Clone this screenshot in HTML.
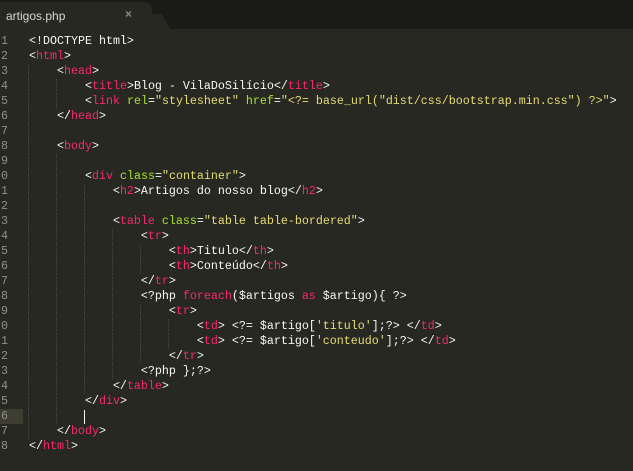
<!DOCTYPE html>
<html><head><meta charset="utf-8"><style>
html,body{margin:0;padding:0;width:633px;height:471px;overflow:hidden;background:#272822}
.top{position:absolute;left:0;top:0;width:633px;height:29px;background:#1a1a16}
.tab{position:absolute;left:0;top:2px;width:152px;height:27px;background:#272822;border-radius:0 8px 0 0;}
.tab:after{content:"";position:absolute;right:-14px;top:12px;width:20px;height:15px;background:#272822;transform:skewX(30deg);}
.tabt{position:absolute;left:6px;top:9px;color:#d8d8d0;font:12px "Liberation Sans",sans-serif;z-index:2}
.x{position:absolute;left:125px;top:7px;color:#8a8a85;font:bold 12px "Liberation Sans",sans-serif;z-index:2}
.code{position:absolute;left:0;top:34px;width:633px;font:11.67px/15px "Liberation Mono",monospace;color:#f8f8f2}
.l{height:15px;position:relative}
.n{position:absolute;left:1px;color:#8f908a}
.hl{background:#3e3d32;position:absolute;left:0;top:0;width:23px;height:15px}
.t{position:absolute;left:29px;white-space:pre}
.g{position:absolute;top:0;height:15px;border-left:1px dotted #464741}
.k{color:#f92672}.a{color:#a6e22e}.s{color:#e6db74}
.cur{position:absolute;left:84px;top:1px;width:1px;height:14px;background:#f8f8f0}
</style></head><body>
<div class="top"><div class="tab"></div><span class="tabt">artigos.php</span><span class="x">×</span></div>
<div class="code">
<div class="l"><span class="n">1</span><span class="t">&lt;!DOCTYPE html&gt;</span></div>
<div class="l"><span class="n">2</span><span class="t">&lt;<span class="k">html</span>&gt;</span></div>
<div class="l"><span class="n">3</span><i class="g" style="left:28px"></i><span class="t">    &lt;<span class="k">head</span>&gt;</span></div>
<div class="l"><span class="n">4</span><i class="g" style="left:28px"></i><i class="g" style="left:56px"></i><span class="t">        &lt;<span class="k">title</span>&gt;Blog - VilaDoSilício&lt;/<span class="k">title</span>&gt;</span></div>
<div class="l"><span class="n">5</span><i class="g" style="left:28px"></i><i class="g" style="left:56px"></i><span class="t">        &lt;<span class="k">link</span> <span class="a">rel</span>=<span class="s">"stylesheet"</span> <span class="a">href</span>=<span class="s">"&lt;?= base_url("dist/css/bootstrap.min.css") ?&gt;"</span>&gt;</span></div>
<div class="l"><span class="n">6</span><i class="g" style="left:28px"></i><span class="t">    &lt;/<span class="k">head</span>&gt;</span></div>
<div class="l"><span class="n">7</span><i class="g" style="left:28px"></i></div>
<div class="l"><span class="n">8</span><i class="g" style="left:28px"></i><span class="t">    &lt;<span class="k">body</span>&gt;</span></div>
<div class="l"><span class="n">9</span><i class="g" style="left:28px"></i><i class="g" style="left:56px"></i></div>
<div class="l"><span class="n">0</span><i class="g" style="left:28px"></i><i class="g" style="left:56px"></i><span class="t">        &lt;<span class="k">div</span> <span class="a">class</span>=<span class="s">"container"</span>&gt;</span></div>
<div class="l"><span class="n">1</span><i class="g" style="left:28px"></i><i class="g" style="left:56px"></i><i class="g" style="left:84px"></i><span class="t">            &lt;<span class="k">h2</span>&gt;Artigos do nosso blog&lt;/<span class="k">h2</span>&gt;</span></div>
<div class="l"><span class="n">2</span><i class="g" style="left:28px"></i><i class="g" style="left:56px"></i><i class="g" style="left:84px"></i></div>
<div class="l"><span class="n">3</span><i class="g" style="left:28px"></i><i class="g" style="left:56px"></i><i class="g" style="left:84px"></i><span class="t">            &lt;<span class="k">table</span> <span class="a">class</span>=<span class="s">"table table-bordered"</span>&gt;</span></div>
<div class="l"><span class="n">4</span><i class="g" style="left:28px"></i><i class="g" style="left:56px"></i><i class="g" style="left:84px"></i><i class="g" style="left:112px"></i><span class="t">                &lt;<span class="k">tr</span>&gt;</span></div>
<div class="l"><span class="n">5</span><i class="g" style="left:28px"></i><i class="g" style="left:56px"></i><i class="g" style="left:84px"></i><i class="g" style="left:112px"></i><i class="g" style="left:140px"></i><span class="t">                    &lt;<span class="k">th</span>&gt;Titulo&lt;/<span class="k">th</span>&gt;</span></div>
<div class="l"><span class="n">6</span><i class="g" style="left:28px"></i><i class="g" style="left:56px"></i><i class="g" style="left:84px"></i><i class="g" style="left:112px"></i><i class="g" style="left:140px"></i><span class="t">                    &lt;<span class="k">th</span>&gt;Conteúdo&lt;/<span class="k">th</span>&gt;</span></div>
<div class="l"><span class="n">7</span><i class="g" style="left:28px"></i><i class="g" style="left:56px"></i><i class="g" style="left:84px"></i><i class="g" style="left:112px"></i><span class="t">                &lt;/<span class="k">tr</span>&gt;</span></div>
<div class="l"><span class="n">8</span><i class="g" style="left:28px"></i><i class="g" style="left:56px"></i><i class="g" style="left:84px"></i><i class="g" style="left:112px"></i><span class="t">                &lt;?php <span class="k">foreach</span>($artigos <span class="k">as</span> $artigo){ ?&gt;</span></div>
<div class="l"><span class="n">9</span><i class="g" style="left:28px"></i><i class="g" style="left:56px"></i><i class="g" style="left:84px"></i><i class="g" style="left:112px"></i><i class="g" style="left:140px"></i><span class="t">                    &lt;<span class="k">tr</span>&gt;</span></div>
<div class="l"><span class="n">0</span><i class="g" style="left:28px"></i><i class="g" style="left:56px"></i><i class="g" style="left:84px"></i><i class="g" style="left:112px"></i><i class="g" style="left:140px"></i><i class="g" style="left:168px"></i><span class="t">                        &lt;<span class="k">td</span>&gt; &lt;?= $artigo[<span class="s">'titulo'</span>];?&gt; &lt;/<span class="k">td</span>&gt;</span></div>
<div class="l"><span class="n">1</span><i class="g" style="left:28px"></i><i class="g" style="left:56px"></i><i class="g" style="left:84px"></i><i class="g" style="left:112px"></i><i class="g" style="left:140px"></i><i class="g" style="left:168px"></i><span class="t">                        &lt;<span class="k">td</span>&gt; &lt;?= $artigo[<span class="s">'conteudo'</span>];?&gt; &lt;/<span class="k">td</span>&gt;</span></div>
<div class="l"><span class="n">2</span><i class="g" style="left:28px"></i><i class="g" style="left:56px"></i><i class="g" style="left:84px"></i><i class="g" style="left:112px"></i><i class="g" style="left:140px"></i><span class="t">                    &lt;/<span class="k">tr</span>&gt;</span></div>
<div class="l"><span class="n">3</span><i class="g" style="left:28px"></i><i class="g" style="left:56px"></i><i class="g" style="left:84px"></i><i class="g" style="left:112px"></i><span class="t">                &lt;?php };?&gt;</span></div>
<div class="l"><span class="n">4</span><i class="g" style="left:28px"></i><i class="g" style="left:56px"></i><i class="g" style="left:84px"></i><span class="t">            &lt;/<span class="k">table</span>&gt;</span></div>
<div class="l"><span class="n">5</span><i class="g" style="left:28px"></i><i class="g" style="left:56px"></i><span class="t">        &lt;/<span class="k">div</span>&gt;</span></div>
<div class="l"><span class="hl"></span><span class="n">6</span><i class="g" style="left:28px"></i><i class="g" style="left:56px"></i><span class="cur"></span></div>
<div class="l"><span class="n">7</span><i class="g" style="left:28px"></i><span class="t">    &lt;/<span class="k">body</span>&gt;</span></div>
<div class="l"><span class="n">8</span><span class="t">&lt;/<span class="k">html</span>&gt;</span></div>
</div>
</body></html>
